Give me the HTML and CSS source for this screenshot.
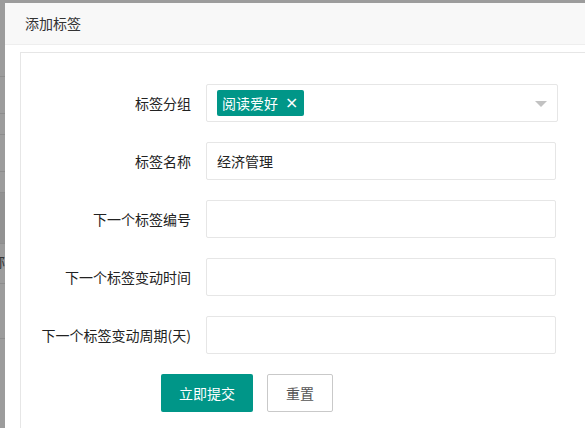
FILE: index.html
```html
<!DOCTYPE html>
<html lang="zh-CN">
<head>
<meta charset="utf-8">
<title>添加标签</title>
<link rel="stylesheet" href="styles.css">
</head>
<body>
<div class="page">
  <div class="bg-row r1"></div>
  <div class="bg-row r2"></div>
  <div class="bg-row r3"></div>
  <div class="bg-row r4"></div>
  <div class="bg-row r5"></div>
  <div class="bg-row r6 dark"></div>
  <div class="bg-row r7"><span class="bg-text">称</span></div>
  <div class="bg-row r8"></div>
  <div class="bg-row r9"></div>
</div>

<div class="modal">
  <div class="modal-title">添加标签</div>
  <div class="modal-body">
    <div class="frame">
      <form class="form">
        <div class="form-item">
          <label class="form-label">标签分组</label>
          <div class="select">
            <span class="tag">阅读爱好<span class="tag-close">×</span></span>
            <span class="caret"></span>
          </div>
        </div>
        <div class="form-item">
          <label class="form-label">标签名称</label>
          <div class="input">经济管理</div>
        </div>
        <div class="form-item">
          <label class="form-label">下一个标签编号</label>
          <div class="input"></div>
        </div>
        <div class="form-item">
          <label class="form-label">下一个标签变动时间</label>
          <div class="input"></div>
        </div>
        <div class="form-item">
          <label class="form-label">下一个标签变动周期(天)</label>
          <div class="input"></div>
        </div>
        <div class="form-actions">
          <button type="button" class="btn btn-primary">立即提交</button>
          <button type="button" class="btn btn-default">重置</button>
        </div>
      </form>
    </div>
  </div>
</div>
</body>
</html>
```
FILE: styles.css
```css
html, body {
  margin: 0;
  padding: 0;
  width: 585px;
  height: 428px;
  overflow: hidden;
  font-family: "Noto Sans CJK SC", "Liberation Sans", sans-serif;
  font-size: 14px;
  color: #333;
}

body {
  position: relative;
  background: #9c9c9c;
}

.page {
  display: flex;
  flex-direction: column;
}

.bg-row {
  box-sizing: border-box;
  border-bottom: 1px solid #8d8d8d;
  background: #9c9c9c;
  position: relative;
  overflow: hidden;
}
.bg-row.dark { background: #929292; }
.r1 { height: 77px; }
.r2 { height: 37px; }
.r3 { height: 21px; }
.r4 { height: 37px; }
.r5 { height: 21px; }
.r6 { height: 51px; }
.r7 { height: 40px; }
.r8 { height: 55px; }
.r9 { height: 89px; border-bottom: none; }

.bg-text {
  position: absolute;
  left: -9px;
  top: 10px;
  font-size: 14px;
  color: #333;
  line-height: 14px;
}

.modal {
  position: absolute;
  left: 5px;
  top: 3px;
  width: 580px;
  height: 425px;
  background: #fff;
  overflow: hidden;
}

.modal-title {
  box-sizing: border-box;
  height: 42px;
  line-height: 41px;
  padding-left: 20px;
  background: #f8f8f8;
  border-bottom: 1px solid #eee;
  color: #333;
  font-size: 14px;
}

.modal-body {
  padding: 7px 0 0 15px;
}

.frame {
  box-sizing: border-box;
  border-top: 1px solid #e6e6e6;
  border-left: 1px solid #e6e6e6;
  height: 376px;
}

.form {
  padding-top: 31px;
  display: flex;
  flex-direction: column;
  gap: 20px;
}

.form-item {
  display: flex;
  align-items: center;
  height: 38px;
}

.form-label {
  box-sizing: border-box;
  width: 185px;
  padding-right: 15px;
  text-align: right;
  color: #222;
  white-space: nowrap;
}

.input, .select {
  box-sizing: border-box;
  height: 38px;
  border: 1px solid #e6e6e6;
  border-radius: 2px;
  background: #fff;
  padding-left: 10px;
  display: flex;
  align-items: center;
  color: #222;
}

.input { width: 350px; }

.select {
  width: 352px;
  position: relative;
}

.tag {
  display: inline-flex;
  align-items: center;
  height: 26px;
  padding: 0 6px 0 5px;
  background: #009688;
  color: #fff;
  border-radius: 2px;
  line-height: 26px;
}

.tag-close {
  margin-left: 7px;
  font-family: "DejaVu Sans", sans-serif;
  font-size: 16px;
}

.caret {
  position: absolute;
  right: 10px;
  top: 16px;
  width: 0;
  height: 0;
  border-left: 6px solid transparent;
  border-right: 6px solid transparent;
  border-top: 6px solid #c2c2c2;
}

.form-actions {
  display: flex;
  gap: 14px;
  padding-left: 140px;
}

.btn {
  box-sizing: border-box;
  height: 38px;
  padding: 0 18px;
  font-family: "Noto Sans CJK SC", "Liberation Sans", sans-serif;
  font-size: 14px;
  border-radius: 2px;
  cursor: pointer;
}

.btn-primary {
  width: 92px;
  border: none;
  background: #009688;
  color: #fff;
}

.btn-default {
  width: 66px;
  border: 1px solid #c9c9c9;
  background: #fff;
  color: #555;
}
```
